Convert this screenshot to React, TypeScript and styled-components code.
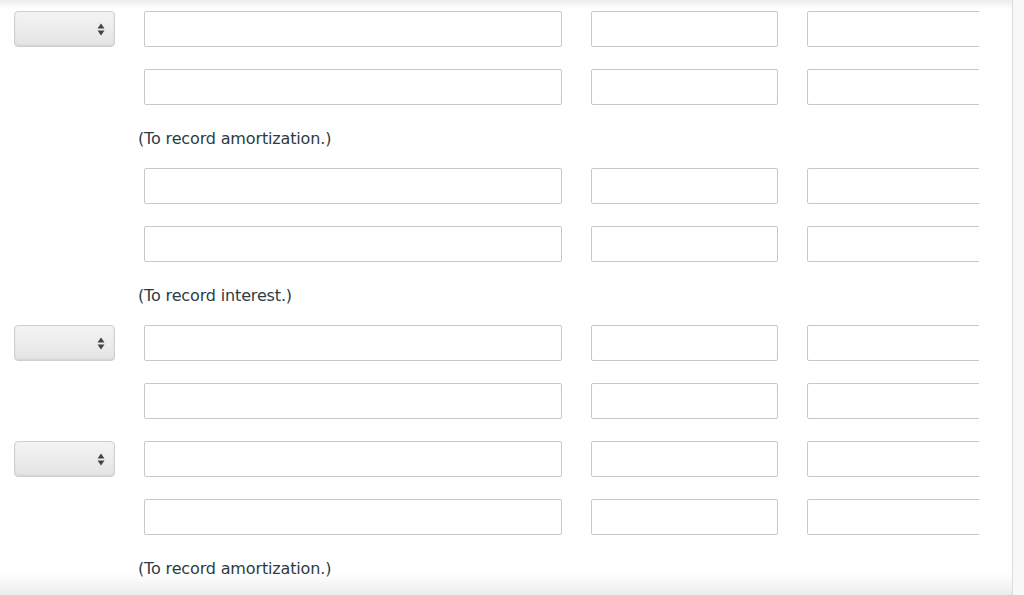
import styled, { createGlobalStyle } from 'styled-components'

const GlobalStyle = createGlobalStyle`
  html, body {
    margin: 0;
    padding: 0;
    background: #f8f8f8;
    overflow: hidden;
  }
`

const Page = styled.div`
  display: flex;
  height: 595px;
  width: 1024px;
`

const Sheet = styled.div`
  position: relative;
  width: 1012px;
  height: 595px;
  background: #fff;
  border-right: 1px solid #dcdcdc;
  overflow: hidden;

  &::before,
  &::after {
    content: '';
    position: absolute;
    left: 0;
    right: 0;
    pointer-events: none;
  }

  &::before {
    top: 0;
    height: 9px;
    background: linear-gradient(#ececec, rgba(255, 255, 255, 0));
  }

  &::after {
    bottom: 0;
    height: 22px;
    background: linear-gradient(rgba(255, 255, 255, 0), #ececec);
  }
`

const Grid = styled.div`
  display: grid;
  grid-template-columns: 101px 418px 187px 172px;
  column-gap: 29px;
  row-gap: 22px;
  padding: 11px 0 0 14px;
  align-items: center;
`

const Select = styled.div`
  position: relative;
  grid-column: 1;
  height: 36px;
  box-sizing: border-box;
  border: 1px solid #cfcfcf;
  border-radius: 4px;
  background: linear-gradient(#f4f4f4, #e4e4e4);
  box-shadow: inset 0 -1px 2px rgba(0, 0, 0, 0.08);

  svg {
    position: absolute;
    right: 9px;
    top: 11px;
  }
`

const Field = styled.div<{ $col: number }>`
  grid-column: ${({ $col }) => $col};
  height: 36px;
  box-sizing: border-box;
  border: 1px solid #c8c8c8;
  border-radius: 2px;
  background: #fff;
`

const ClipCell = styled.div`
  grid-column: 4;
  height: 36px;
  overflow: hidden;
`

const WideField = styled.div`
  width: 240px;
  height: 36px;
  box-sizing: border-box;
  border: 1px solid #c8c8c8;
  border-radius: 2px;
`

const Note = styled.div`
  grid-column: 2 / 5;
  margin-left: -6px;
  height: 19px;
  line-height: 24px;
  font-family: 'DejaVu Sans', Verdana, sans-serif;
  font-size: 16px;
  letter-spacing: -0.15px;
  color: #2d3b45;
`

const Arrows = () => (
  <svg width="8" height="13" viewBox="0 0 8 13">
    <path d="M4 0.5 L7.5 5.5 H0.5 Z" fill="#444" />
    <path d="M4 12.5 L7.5 7.5 H0.5 Z" fill="#444" />
  </svg>
)

type Row = { select?: boolean } | { note: string }

const rows: Row[] = [
  { select: true },
  {},
  { note: '(To record amortization.)' },
  {},
  {},
  { note: '(To record interest.)' },
  { select: true },
  {},
  { select: true },
  {},
  { note: '(To record amortization.)' },
]

const App = () => (
  <>
    <GlobalStyle />
    <Page>
      <Sheet>
        <Grid>
          {rows.map((r, i) =>
            'note' in r ? (
              <Note key={i}>{r.note}</Note>
            ) : (
              <>
                {r.select && (
                  <Select key={`s${i}`}>
                    <Arrows />
                  </Select>
                )}
                <Field key={`a${i}`} $col={2} />
                <Field key={`b${i}`} $col={3} />
                <ClipCell key={`c${i}`}>
                  <WideField />
                </ClipCell>
              </>
            )
          )}
        </Grid>
      </Sheet>
    </Page>
  </>
)

export default App
